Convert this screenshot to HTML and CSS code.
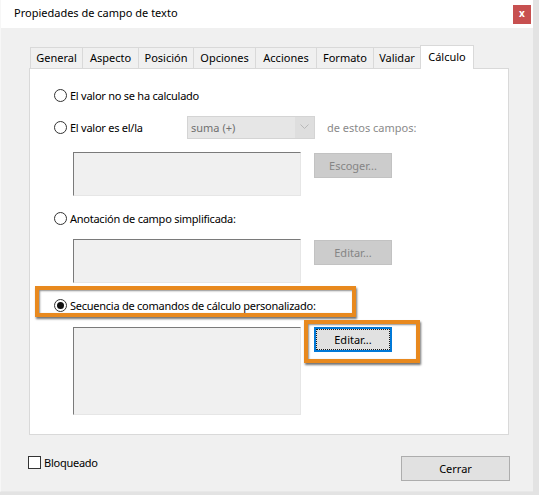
FILE: index.html
```html
<!DOCTYPE html>
<html lang="es">
<head>
<meta charset="utf-8">
<title>Propiedades de campo de texto</title>
<link rel="stylesheet" href="styles.css">
</head>
<body>
<div class="window">
  <div class="titlebar">
    <span class="title">Propiedades de campo de texto</span>
    <span class="close">x</span>
  </div>
  <div class="tabs">
    <div class="tab t1">General</div>
    <div class="tab t2">Aspecto</div>
    <div class="tab t3">Posición</div>
    <div class="tab t4">Opciones</div>
    <div class="tab t5">Acciones</div>
    <div class="tab t6">Formato</div>
    <div class="tab t7">Validar</div>
    <div class="tab t8 active">Cálculo</div>
  </div>
  <div class="panel">
    <div class="row r1">
      <span class="radio"></span><span class="label">El valor no se ha calculado</span>
    </div>
    <div class="row r2">
      <span class="radio"></span><span class="label fixed">El valor es el/la</span>
      <span class="combo"><span class="combo-text">suma (+)</span><span class="combo-arrow"><svg width="9" height="6" viewBox="0 0 9 6"><path d="M0.5 0.5 L4.5 4.5 L8.5 0.5" fill="none" stroke="#b8b8b8" stroke-width="1"/></svg></span></span>
      <span class="muted">de estos campos:</span>
    </div>
    <div class="boxrow b1">
      <div class="field"></div>
      <div class="btn disabled">Escoger...</div>
    </div>
    <div class="row r3">
      <span class="radio"></span><span class="label">Anotación de campo simplificada:</span>
    </div>
    <div class="boxrow b2">
      <div class="field"></div>
      <div class="btn disabled">Editar...</div>
    </div>
    <div class="row r4">
      <span class="radio checked"></span><span class="label">Secuencia de comandos de cálculo personalizado:</span>
    </div>
    <div class="boxrow b3">
      <div class="field tall"></div>
      <div class="btn focused">Editar...</div>
    </div>
    <div class="mark mark1"></div>
    <div class="mark mark2"></div>
  </div>
  <div class="footer">
    <div class="check"><span class="checkbox"></span><span class="label">Bloqueado</span></div>
    <div class="btn close-btn">Cerrar</div>
  </div>
</div>
</body>
</html>
```

FILE: styles.css
```css
* { box-sizing: border-box; }
html, body { margin: 0; padding: 0; }
body {
  background: #e3e3e3;
  width: 539px;
  height: 495px;
  overflow: hidden;
  font-family: "Noto Sans", "Open Sans", sans-serif;
  font-size: 11px;
  color: #000;
}
.window {
  width: 533px;
  height: 492px;
  background: #f0f0f0;
  border-left: 1px solid #f7f7f7;
  border-bottom: 1px solid #e8e8e8;
}
.titlebar {
  height: 28px;
  background: #fff;
  display: flex;
  justify-content: space-between;
  align-items: flex-start;
  padding-left: 13px;
}
.title {
  margin-top: 5px;
  font-size: 11px;
  line-height: 16px;
}
.close {
  margin-top: 5px;
  margin-right: 2px;
  width: 18px;
  height: 19px;
  background: #c75050;
  color: #fff;
  font-weight: bold;
  font-size: 10px;
  line-height: 17px;
  text-align: center;
}
.tabs {
  display: flex;
  align-items: flex-end;
  margin-top: 17px;
  margin-left: 29px;
  height: 23px;
  position: relative;
  z-index: 2;
}
.tab {
  height: 21px;
  border: 1px solid #d9d9d9;
  border-right: none;
  border-bottom: none;
  background: #f0f0f0;
  text-align: center;
  line-height: 19px;
  white-space: nowrap;
}
.t1 { width: 52px; }
.t2 { width: 56px; }
.t3 { width: 55px; }
.t4 { width: 62px; }
.t5 { width: 61px; }
.t6 { width: 57px; }
.t7 { width: 47px; }
.tab.active {
  width: 54px;
  height: 24px;
  margin-bottom: -1px;
  background: #fff;
  border-right: 1px solid #d9d9d9;
  line-height: 22px;
  padding-bottom: 3px;
}
.panel {
  position: relative;
  margin-left: 28px;
  width: 480px;
  height: 367px;
  background: #fff;
  border: 1px solid #d9d9d9;
}
.row {
  display: flex;
  align-items: center;
  height: 24px;
  padding-left: 24px;
}
.r1 { margin-top: 14px; }
.r2 { margin-top: 8px; }
.r3 { margin-top: 10px; }
.r4 { margin-top: 10px; }
.radio {
  width: 13px;
  height: 13px;
  border: 1px solid #333;
  border-radius: 50%;
  background: #fff;
  flex: none;
  display: flex;
  align-items: center;
  justify-content: center;
}
.radio.checked::after {
  content: "";
  width: 7px;
  height: 7px;
  border-radius: 50%;
  background: #111;
}
.label {
  margin-left: 3px;
  white-space: nowrap;
  letter-spacing: -0.25px;
}
.label.fixed { width: 117px; }
.combo {
  display: flex;
  width: 128px;
  height: 23px;
  border: 1px solid #d4d4d4;
  background: #e6e6e6;
}
.combo-text {
  flex: 1;
  color: #707070;
  line-height: 21px;
  padding-left: 3px;
}
.combo-arrow {
  width: 19px;
  background: #dedede;
  display: flex;
  align-items: center;
  justify-content: center;
}
.muted {
  margin-left: 12px;
  color: #8a8a8a;
}
.boxrow {
  display: flex;
  align-items: flex-start;
  padding-left: 43px;
  gap: 13px;
}
.b1 { margin-top: 13px; }
.b2 { margin-top: 9px; }
.b3 { margin-top: 10px; }
.field {
  width: 228px;
  height: 44px;
  background: #f0f0f0;
  border-top: 1px solid #7a7a7a;
  border-left: 1px solid #7a7a7a;
  border-right: 1px solid #e6e6e6;
  border-bottom: 1px solid #e6e6e6;
}
.field.tall { height: 88px; }
.btn {
  width: 78px;
  height: 25px;
  text-align: center;
  line-height: 23px;
  white-space: nowrap;
}
.btn.disabled {
  margin-top: 1px;
  background: #cccccc;
  border: 1px solid #c2c2c2;
  color: #858585;
}
.btn.focused {
  background: #e1e1e1;
  border: 1px solid #0078d7;
  box-shadow: inset 0 0 0 1px #0078d7;
  outline: 1px dotted #1a1a1a;
  outline-offset: -3px;
}
.mark {
  position: absolute;
  border: 4px solid #e8891e;
  box-shadow: 1px 2px 2px rgba(0,0,0,0.55), inset 1px 1px 2px rgba(0,0,0,0.45);
}
.mark1 { left: 5px; top: 217px; width: 321px; height: 31px; }
.mark2 { left: 274px; top: 251px; width: 116px; height: 43px; }
.footer {
  display: flex;
  justify-content: space-between;
  align-items: center;
  margin-top: 21px;
  margin-left: 27px;
  width: 482px;
  height: 25px;
}
.check {
  display: flex;
  align-items: center;
  margin-top: -12px;
}
.checkbox {
  width: 13px;
  height: 13px;
  border: 1px solid #333;
  background: #fff;
}
.close-btn {
  width: 109px;
  height: 25px;
  background: #e1e1e1;
  border: 1px solid #adadad;
}
```
